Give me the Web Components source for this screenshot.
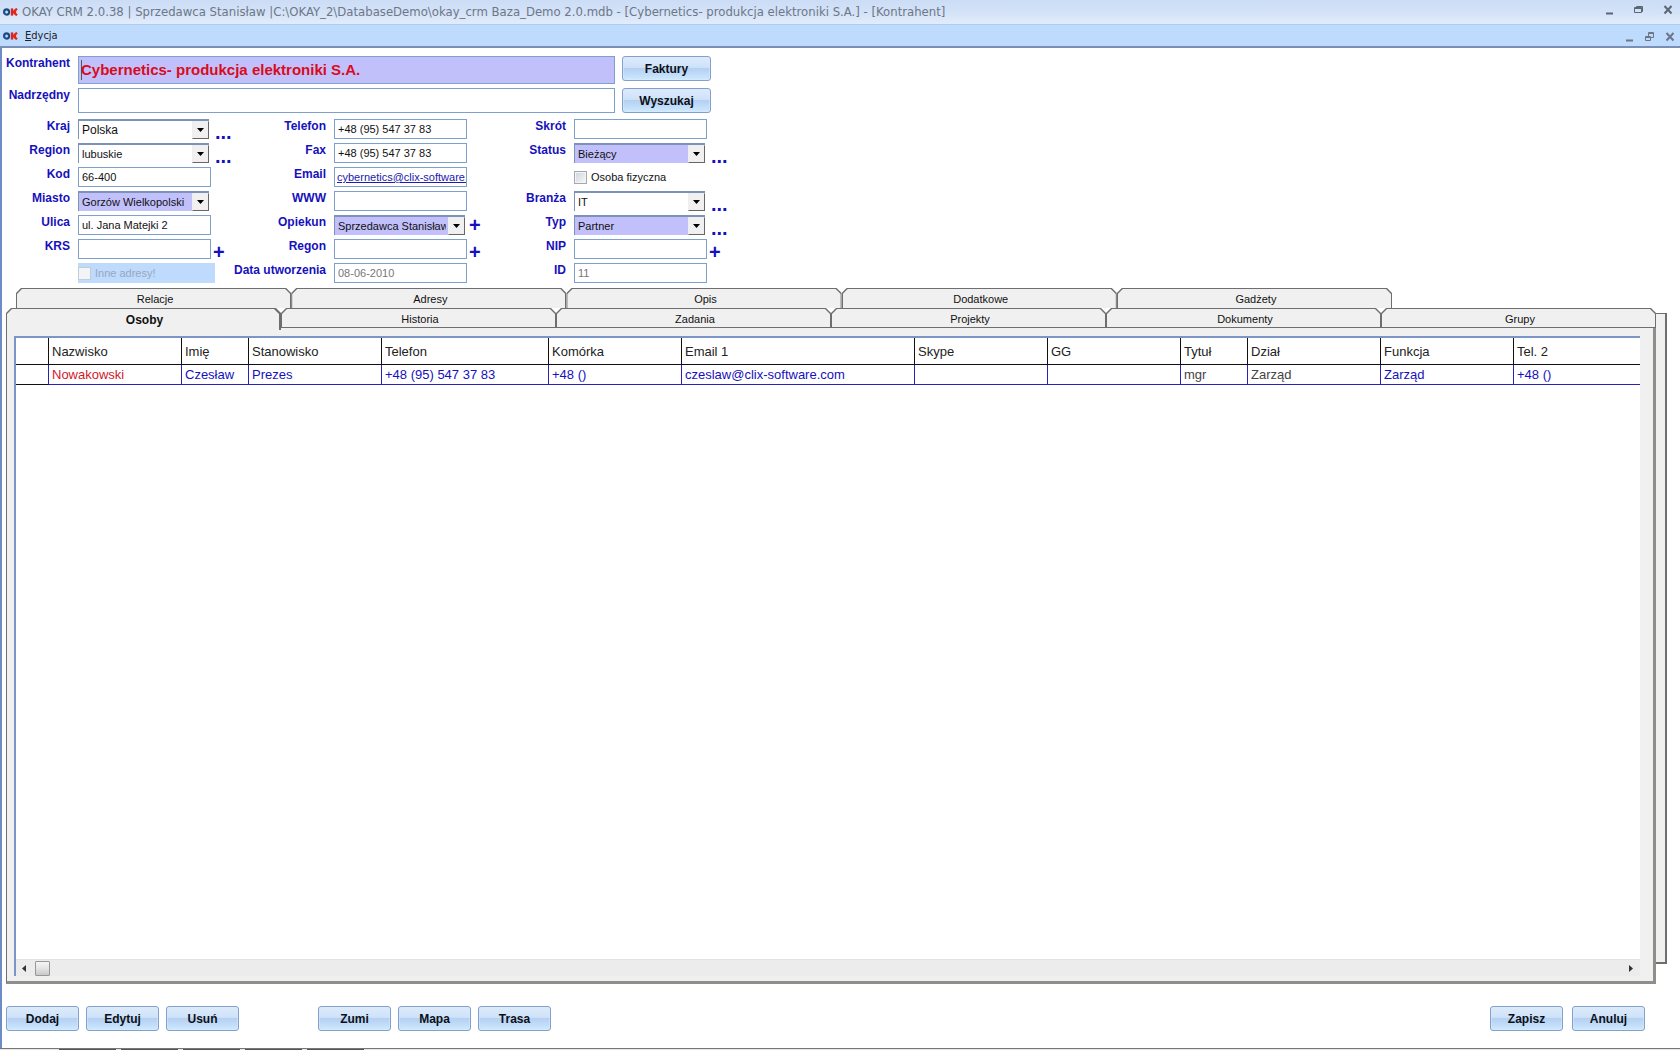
<!DOCTYPE html>
<html lang="pl">
<head>
<meta charset="utf-8">
<title>OKAY CRM</title>
<style>
html,body{margin:0;height:100%;background:#fff}
body{font:11px/14px "Liberation Sans",sans-serif;color:#111;
--blue:#1611bc;--edge:#7f9fcc;--lilac:#c1c0fb;--face:#f0f0f0;--line:#6e6e6e}
</style>
</head>
<body>
<okay-app></okay-app>
<script>
const define=(name,html,setup)=>{
  const t=document.createElement('template');t.innerHTML=html;
  customElements.define(name,class extends HTMLElement{
    connectedCallback(){
      if(this.shadowRoot)return;
      const root=this.attachShadow({mode:'open'});
      root.append(t.content.cloneNode(true));
      if(setup)setup(this,root);
    }
  });
};

define('okay-logo',`<style>:host{display:block;width:15px;height:8px}svg{display:block}</style>
<svg width="15" height="8" viewBox="0 0 15 8" fill="none"><ellipse cx="3.6" cy="4" rx="2.5" ry="2.6" stroke="#1c4d86" stroke-width="2.2"/><path d="M9 .4v7.2" stroke="#d8281e" stroke-width="2.4"/><path d="M14 .7L10.4 4l3.6 3.3M12 1.6v4.8" stroke="#e0281c" stroke-width="2.3"/></svg>`);

define('okay-bar',`<style>
:host{display:flex;align-items:center;box-sizing:border-box;padding:0 6px 0 3px;height:22px;background:#bedafd}
:host([kind=title]){height:25px;padding-bottom:1px;background:linear-gradient(#cbdcf5,#d3e2f8 50%,#e2ecfb);border-bottom:1px solid #aacdf0;color:#6d7787;font:13px/16px "DejaVu Sans Condensed","DejaVu Sans",sans-serif}
:host([kind=menu]){border-bottom:2px solid #7b8fb5;height:23px;padding-right:4px;color:#222;font:11px/14px "DejaVu Sans Condensed","DejaVu Sans",sans-serif}
.text{flex:1;padding-left:4px;white-space:pre}
:host([kind=menu]) .text{padding-left:7px}
.ctl{display:flex;gap:17px}
:host([kind=menu]) .ctl{gap:8px}
button{border:0;background:none;padding:0;width:12px;height:12px;color:#5d6674}
:host([kind=title]) button{margin-top:-3px}
:host([kind=menu]) button{color:#6b7688;margin-top:2px}
svg{display:block}
</style><okay-logo></okay-logo><div class="text"><slot></slot></div>
<div class="ctl">
<button aria-label="Minimalizuj"><svg width="12" height="12"><path d="M2 9.5h7" stroke="currentColor" stroke-width="2"/></svg></button>
<button aria-label="Przywróć"><svg width="12" height="12" fill="none" stroke="currentColor"><path class="r"/></svg></button>
<button aria-label="Zamknij"><svg width="12" height="12"><path d="M2.5 2l7 7.5M9.5 2l-7 7.5" stroke="currentColor" stroke-width="2"/></svg></button>
</div>`,(h,r)=>{
  r.querySelector('.r').setAttribute('d',h.getAttribute('kind')==='title'
    ?'M1.5 3.5h7v5h-7zM1.5 4.5h7M3.5 3V2.5h6v5H9'
    :'M1.5 5.5h5v4h-5zM1.5 6.5h5M4.5 5V1.5h5v5H7M4.5 2.5h5');
});

define('okay-button',`<style>
:host{display:block;width:73px}
:host([size=l]){width:89px}
button{display:block;width:100%;height:25px;padding:1px 0 0;border:1px solid #83a0cd;border-radius:3px;color:#0c1018;font:bold 12px/14px "Liberation Sans",sans-serif;
background:linear-gradient(#dcebfb,#cfe2f8 45%,#b5d0f2 50%,#c0dcf8 75%,#cfeafd);box-shadow:inset 0 0 0 1px #dcebfb88}
</style><button><slot></slot></button>`);

define('okay-field',`<style>
:host{display:flex;gap:8px;height:24px;align-items:flex-start}
:host([kind=big]){height:28px}:host([kind=wide]){height:25px}
label.name{flex:none;width:var(--label,64px);text-align:right;color:var(--blue);font-weight:bold;font-size:12px;line-height:14px;white-space:nowrap}
.box{display:grid;width:133px}
:host([kind=big]) .box,:host([kind=wide]) .box{width:537px}
input.t,select{box-sizing:border-box;width:100%;height:20px;margin:0;padding:0 3px;border:1px solid var(--edge);border-radius:0;background:#fff;color:#111;font:11px/14px "Liberation Sans",sans-serif;outline:0;appearance:none;opacity:1}
:host([kind=wide]) input{height:25px}
:host([kind=big]) input{height:28px;padding:0 2px 2px;background:linear-gradient(#555,#555) 2px 3px/1px 20px no-repeat,var(--lilac);color:#d80c20;font:bold 15px/20px "Liberation Sans",sans-serif}
:host([kind=link]) input{color:#2018b0;text-decoration:underline;padding:0 0 0 2px}
:host([kind=off]) input{color:#777}
select{grid-area:1/1;width:131px;border:0;border-top:2px solid #7d92b8;border-left:1px solid #7d92b8;padding:0 19px 0 3px}
:host([fill]) select{background:var(--lilac)}
:host([large]) select{font-size:12px}
.arrow{grid-area:1/1;justify-self:start;margin:2px 0 0 114px;box-sizing:border-box;width:17px;height:18px;border:1px solid #eee;border-right-color:#666;border-bottom-color:#666;background:var(--face);pointer-events:none;display:grid;place-items:center}
.more{border:0;background:none;padding:0;margin:3px 0 0 -6px;height:20px;color:var(--blue);font:bold 20px/20px "Liberation Sans",sans-serif}
:host([kind=combo]) .more{margin-top:0}
:host([more="..."]) .more{margin:3px 0 0 -4px}
.check{display:flex;align-items:center;gap:4px;height:20px}
.check input{appearance:none;box-sizing:border-box;width:13px;height:13px;margin:0;border:1px solid #a3a9b3;background:linear-gradient(135deg,#cfd4da,#f8f8f8);box-shadow:inset 0 0 0 1px #f4f4f4}
:host([kind=checkoff]) .check{box-sizing:border-box;width:137px;background:#bedafd;color:#97a8c0}
:host([kind=checkoff]) .check input{background:#f2f4f8;border-color:#c3ccd8}
</style>`,(h,r)=>{
  const a=n=>h.getAttribute(n)||'',kind=a('kind');
  if(kind.startsWith('check')){
    r.innerHTML+=`<label class="name"></label><label class="check" for="f"><input type="checkbox" id="f"${kind==='checkoff'?' disabled':''}><span>${a('label')}</span></label>`;
    return;
  }
  const ctl=kind==='combo'
    ?`<select id="f"><option>${a('value')}</option></select><span class="arrow"><svg width="7" height="4"><path d="M0 0h7L3.5 4z"/></svg></span>`
    :`<input class="t" id="f" type="text" value="${a('value')}"${kind==='off'?' readonly':''}>`;
  r.innerHTML+=`<label class="name" for="f">${a('label')}</label><div class="box">${ctl}</div>`+
    (h.hasAttribute('more')?`<button class="more">${a('more')}</button>`:'');
});

define('okay-group',`<style>:host{display:flex;flex-direction:column;flex:none}</style><slot></slot>`);

define('okay-form',`<style>
:host{display:flex;flex-direction:column;padding:8px 6px 1px 4px}
.head{display:flex;gap:7px;margin-bottom:4px}
.head.second{margin-bottom:6px}
.cols{display:flex}
okay-group{width:228px}
okay-group.b{width:256px;--label:92px}
okay-group.c{width:240px;--label:76px}
</style>
<div class="head"><okay-field kind="big" label="Kontrahent" value="Cybernetics- produkcja elektroniki S.A."></okay-field><okay-button size="l">Faktury</okay-button></div>
<div class="head second"><okay-field kind="wide" label="Nadrzędny"></okay-field><okay-button size="l">Wyszukaj</okay-button></div>
<div class="cols">
<okay-group>
<okay-field kind="combo" large label="Kraj" value="Polska" more="..."></okay-field>
<okay-field kind="combo" label="Region" value="lubuskie" more="..."></okay-field>
<okay-field label="Kod" value="66-400"></okay-field>
<okay-field kind="combo" fill label="Miasto" value="Gorzów Wielkopolski"></okay-field>
<okay-field label="Ulica" value="ul. Jana Matejki 2"></okay-field>
<okay-field label="KRS" more="+"></okay-field>
<okay-field kind="checkoff" label="Inne adresy!"></okay-field>
</okay-group>
<okay-group class="b">
<okay-field label="Telefon" value="+48 (95) 547 37 83"></okay-field>
<okay-field label="Fax" value="+48 (95) 547 37 83"></okay-field>
<okay-field kind="link" label="Email" value="cybernetics@clix-software."></okay-field>
<okay-field label="WWW"></okay-field>
<okay-field kind="combo" fill label="Opiekun" value="Sprzedawca Stanisław" more="+"></okay-field>
<okay-field label="Regon" more="+"></okay-field>
<okay-field kind="off" label="Data utworzenia" value="08-06-2010"></okay-field>
</okay-group>
<okay-group class="c">
<okay-field label="Skrót"></okay-field>
<okay-field kind="combo" fill label="Status" value="Bieżący" more="..."></okay-field>
<okay-field kind="check" label="Osoba fizyczna"></okay-field>
<okay-field kind="combo" label="Branża" value="IT" more="..."></okay-field>
<okay-field kind="combo" fill label="Typ" value="Partner" more="..."></okay-field>
<okay-field label="NIP" more="+"></okay-field>
<okay-field kind="off" label="ID" value="11"></okay-field>
</okay-group>
</div>`);

define('okay-tab',`<style>
:host{display:block;flex:1 1 0;min-width:0;height:20px;--cut:5px}
button{display:block;width:100%;height:100%;border:0;padding:1px 1px 0;background:var(--line);color:#111;font:11px/14px "Liberation Sans",sans-serif;
clip-path:polygon(0 100%,0 var(--cut),var(--cut) 0,calc(100% - var(--cut)) 0,100% var(--cut),100% 100%)}
span{display:grid;place-items:center;height:100%;box-sizing:border-box;padding:1px 0 0 3px;background:var(--face);
clip-path:polygon(0 100%,0 var(--cut),var(--cut) 0,calc(100% - var(--cut)) 0,100% var(--cut),100% 100%)}
:host([front]) button{padding-bottom:1px}
:host([active]){height:22px}
:host([active]) button{font-size:12px;font-weight:bold;padding-right:2px;padding-bottom:0}
</style><button role="tab"><span><slot></slot></span></button>`);

define('okay-table',`<style>
:host{display:flex;flex-direction:column;background:#fff;border-top:2px solid #7b96c6;border-left:2px solid #7b96c6;overflow:hidden}
table{border-collapse:separate;border-spacing:0;table-layout:fixed;width:100%;font-size:13px;line-height:16px;color:var(--blue)}
th,td{box-sizing:border-box;padding:1px 0 0 3px;text-align:left;font-weight:normal;white-space:nowrap;overflow:hidden;border-right:1px solid #111;border-bottom:1px solid #111}
th{height:27px;color:#222}
td{height:20px;border-color:#2a22b8}
td:first-child{border-bottom-color:#111}
th:last-child,td:last-child{border-right:0}
.red{color:#d0182c}.gray{color:#444}
.space{flex:1}
.scroll{display:flex;align-items:center;height:16px;padding:0 6px;background:#ececec;border-top:1px solid #e2e2e2;gap:8px}
.thumb{box-sizing:border-box;width:15px;height:15px;border:1px solid #979797;border-radius:1px;background:linear-gradient(#f5f5f5,#e3e3e3 50%,#c9c9c9)}
.track{flex:1}
svg{display:block}
</style>
<table><colgroup></colgroup><thead><tr></tr></thead><tbody><tr></tr></tbody></table>
<div class="space"></div>
<div class="scroll"><svg width="5" height="7"><path d="M4 0v7L0 3.5z" fill="#333"/></svg><div class="thumb"></div><div class="track"></div><svg width="5" height="7"><path d="M0 0v7l4-3.5z" fill="#333"/></svg></div>`,(h,r)=>{
  const cols=[[33,'',''],[133,'Nazwisko','Nowakowski','red'],[67,'Imię','Czesław'],[133,'Stanowisko','Prezes'],[167,'Telefon','+48 (95) 547 37 83'],[133,'Komórka','+48 ()'],[233,'Email 1','czeslaw@clix-software.com'],[133,'Skype',''],[133,'GG',''],[67,'Tytuł','mgr','gray'],[133,'Dział','Zarząd','gray'],[133,'Funkcja','Zarząd'],[0,'Tel. 2','+48 ()']];
  r.querySelector('colgroup').innerHTML=cols.map(c=>`<col${c[0]?` style="width:${c[0]}px"`:''}>`).join('');
  r.querySelector('thead tr').innerHTML=cols.map(c=>`<th>${c[1]}</th>`).join('');
  r.querySelector('tbody tr').innerHTML=cols.map(c=>`<td class="${c[3]||''}">${c[2]}</td>`).join('');
});

define('okay-tabs',`<style>
:host{display:grid;grid-template:1fr/1fr;margin:0 13px 0 4px}
.plate{grid-area:1/1;margin:25px 0 20px;background:var(--face);border:1px solid var(--line);border-right-width:2px;border-bottom-width:2px;justify-self:end;width:20px}
.stack{grid-area:1/1;display:flex;flex-direction:column;margin-right:11px;min-width:0}
.row{display:flex}
.back{padding:0 264px 0 10px}
.front{z-index:1;height:20px}
.panel{flex:1;display:flex;min-height:0;border:1px solid var(--line);border-top:0;border-right:3px solid #8e8e8a;border-bottom:3px solid #8e8e8a;background:var(--face);padding:8px 13px 5px 7px}
okay-table{flex:1;min-width:0}
</style>
<div class="plate"></div>
<div class="stack">
<div class="row back"><okay-tab>Relacje</okay-tab><okay-tab>Adresy</okay-tab><okay-tab>Opis</okay-tab><okay-tab>Dodatkowe</okay-tab><okay-tab>Gadżety</okay-tab></div>
<div class="row front"><okay-tab active>Osoby</okay-tab><okay-tab front>Historia</okay-tab><okay-tab front>Zadania</okay-tab><okay-tab front>Projekty</okay-tab><okay-tab front>Dokumenty</okay-tab><okay-tab front>Grupy</okay-tab></div>
<div class="panel"><okay-table></okay-table></div>
</div>`);

define('okay-actions',`<style>
:host{display:flex;gap:7px;padding:22px 35px 17px 4px}
.gap{width:65px}.fill{flex:1}
.end{display:flex;gap:9px}
</style>
<okay-button>Dodaj</okay-button><okay-button>Edytuj</okay-button><okay-button>Usuń</okay-button><div class="gap"></div>
<okay-button>Zumi</okay-button><okay-button>Mapa</okay-button><okay-button>Trasa</okay-button><div class="fill"></div>
<div class="end"><okay-button>Zapisz</okay-button><okay-button>Anuluj</okay-button></div>`);

define('okay-app',`<style>
:host{display:flex;flex-direction:column;min-height:100vh}
u{text-underline-offset:1px}
main{flex:1;display:flex;flex-direction:column;border-left:2px solid #6d8bc4}
okay-tabs{flex:1}
.foot{display:flex;gap:5px;height:1px;padding-left:59px;border-top:1px solid #777;background:#e6e6e6}
.foot i{width:57px;background:#555}
</style>
<okay-bar kind="title">OKAY CRM 2.0.38 | Sprzedawca Stanisław |C:\\OKAY_2\\DatabaseDemo\\okay_crm Baza_Demo 2.0.mdb - [Cybernetics- produkcja elektroniki S.A.] - [Kontrahent]</okay-bar>
<okay-bar kind="menu"><u>E</u>dycja</okay-bar>
<main><okay-form></okay-form><okay-tabs></okay-tabs><okay-actions></okay-actions></main>
<div class="foot"><i></i><i></i><i></i><i></i><i></i></div>`);
</script>
</body>
</html>
